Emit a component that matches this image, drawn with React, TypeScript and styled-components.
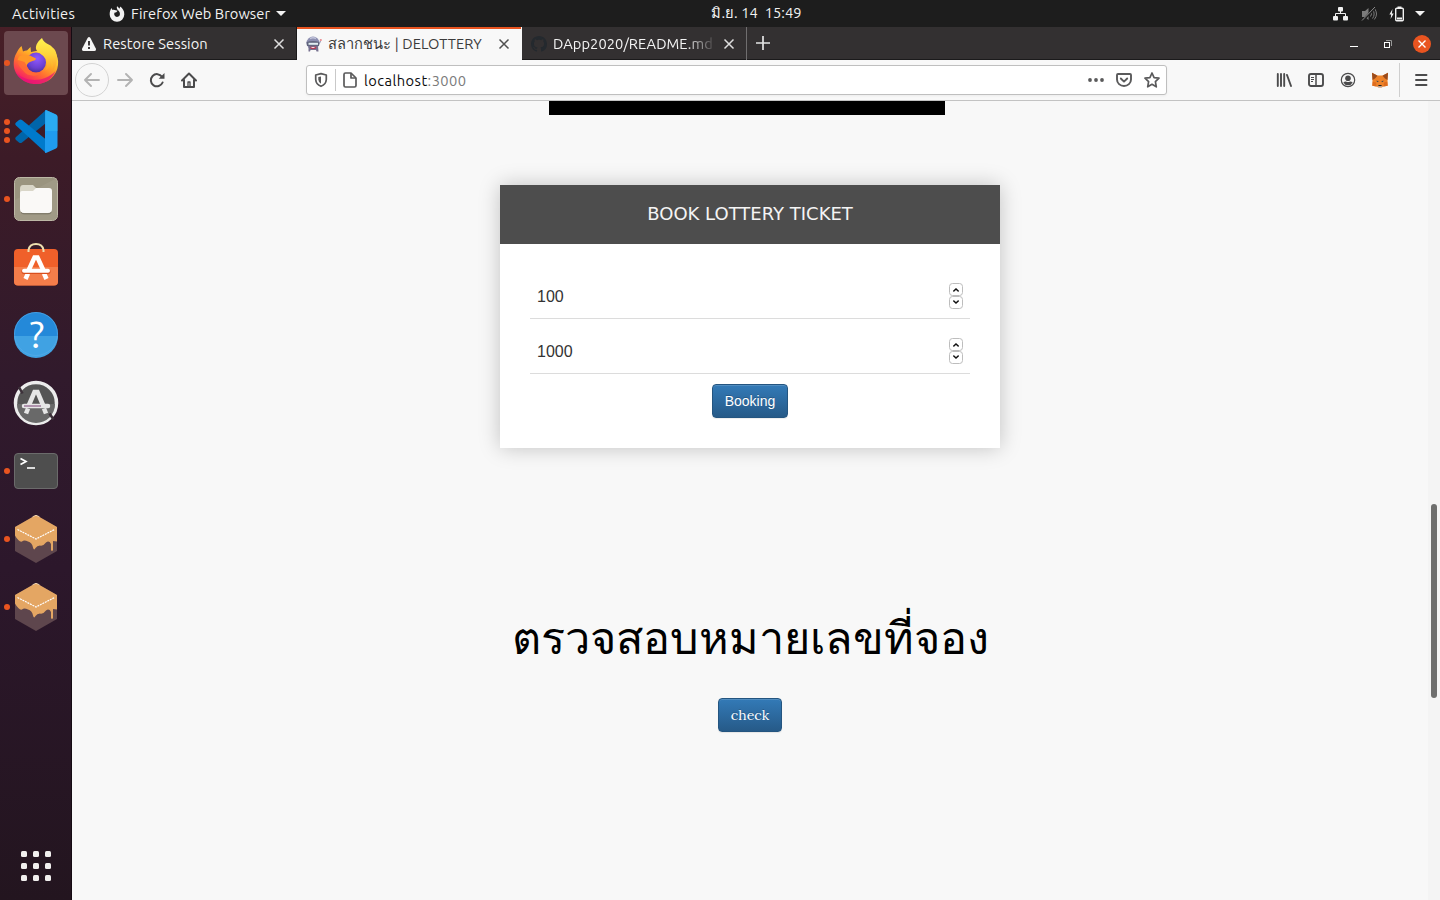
import React from "react";
import styled, { createGlobalStyle } from "styled-components";

const GlobalStyle = createGlobalStyle`
  * { box-sizing: border-box; }
  html, body { margin: 0; height: 100%; overflow: hidden; background: #f8f8f8; }
  svg { display: block; flex: none; }
`;

const uiFont = `Ubuntu, "Noto Sans", "DejaVu Sans", sans-serif`;

const Desktop = styled.div`
  width: 1440px;
  height: 900px;
  display: grid;
  grid-template-rows: 27px 1fr;
  font-family: ${uiFont};
  font-size: 14.667px;
  overflow: hidden;
`;

const TopBar = styled.header`
  display: grid;
  grid-template-columns: 1fr auto 1fr;
  align-items: center;
  background: #1d1d1d;
  color: #f2f2f2;
  padding: 0 15px 0 12px;
`;

const Label = styled.span<{ $spacing?: number; $size?: number }>`
  font-size: ${(p) => p.$size ?? 14.667}px;
  letter-spacing: ${(p) => p.$spacing ?? 0.06}px;
  line-height: 20px;
  white-space: pre;
`;

const Clock = styled(Label)`
  margin: 0 0 2px 76px;
`;

const BarStart = styled.div`
  display: flex;
  align-items: center;
`;

const AppMenu = styled.div`
  display: flex;
  align-items: center;
  gap: 6px;
  margin-left: 34px;
`;

const BarEnd = styled.div`
  display: flex;
  justify-content: flex-end;
  align-items: center;
`;

const Work = styled.div`
  display: grid;
  grid-template-columns: 72px 1fr;
  min-height: 0;
`;

const Dock = styled.nav`
  display: flex;
  flex-direction: column;
  gap: 4px;
  padding: 4px;
  border-right: 1px solid #150b13;
  background: linear-gradient(180deg, #481f27 0%, #3c1b27 15%, #311a2c 40%, #2c172b 62%, #23151f 100%);
`;

const DockItem = styled.button<{ $active?: boolean; $lift?: number }>`
  position: relative;
  flex: none;
  width: 64px;
  height: 64px;
  padding: 0 0 ${(p) => (p.$lift ?? 0) * 2}px;
  border: 0;
  border-radius: 4px;
  display: flex;
  align-items: center;
  justify-content: center;
  background: ${(p) => (p.$active ? "#6c494f" : "transparent")};
`;

const RunningDots = styled.span`
  position: absolute;
  left: 0;
  top: 0;
  height: 100%;
  display: flex;
  flex-direction: column;
  justify-content: center;
  gap: 3px;
  i {
    width: 6px;
    height: 6px;
    border-radius: 50%;
    background: #e95420;
  }
`;

const AppGrid = styled.button`
  margin: auto 0 15px 17px;
  width: 30px;
  height: 30px;
  padding: 0;
  border: 0;
  background: none;
  display: grid;
  grid-template-columns: repeat(3, 6px);
  grid-auto-rows: 6px;
  gap: 6px;
  i {
    background: #f1efee;
    border-radius: 1.5px;
  }
`;

const Browser = styled.section`
  display: grid;
  grid-template-rows: 33px 41px 1fr;
  min-width: 0;
  min-height: 0;
`;

const TabBar = styled.div`
  display: flex;
  background: #333031;
  box-shadow: inset 0 -1px #1b1a1b;
`;

const Tab = styled.div<{ $active?: boolean }>`
  width: 225px;
  flex: none;
  display: flex;
  align-items: center;
  padding: 0 11px 0 9px;
  color: ${(p) => (p.$active ? "#3b3b3b" : "#f4f4f4")};
  background: ${(p) => (p.$active ? "#f8f8f8" : "transparent")};
  box-shadow: ${(p) => (p.$active ? "inset 0 2px #e95420" : "none")};
  border-right: 1px solid ${(p) => (p.$active ? "#f8f8f8" : "transparent")};
  &:first-child { border-right-color: #1b1a1b; }
`;

const TabTitle = styled(Label)<{ $fade?: boolean }>`
  flex: 1;
  min-width: 0;
  overflow: hidden;
  margin: 0 9px 0 6px;
  ${(p) => p.$fade && "mask-image: linear-gradient(90deg, #000 82%, transparent 102%);"}
`;

const NewTab = styled.button`
  width: 32px;
  border: 0;
  padding: 0 0 2px;
  background: none;
  display: flex;
  align-items: center;
  justify-content: center;
`;

const TabStripEdge = styled.i`
  width: 1px;
  margin-left: -1px;
  background: #706e6f;
`;

const WindowControls = styled.div`
  margin-left: auto;
  padding-right: 9px;
  display: flex;
  align-items: center;
`;

const CloseWindow = styled.span`
  width: 18px;
  height: 18px;
  margin-left: 21px;
  border-radius: 50%;
  background: #e95420;
  display: flex;
  align-items: center;
  justify-content: center;
`;

const Toolbar = styled.div`
  display: flex;
  align-items: center;
  background: #f8f8f8;
  border-bottom: 1px solid #c3c3c3;
  padding-left: 3px;
`;

const BackButton = styled.span`
  width: 34px;
  height: 34px;
  border: 1px solid #d3d3d3;
  border-radius: 50%;
  display: flex;
  align-items: center;
  justify-content: center;
`;

const NavIcons = styled.div`
  display: flex;
  align-items: center;
  gap: 16px;
  margin-left: 8px;
`;

const UrlBar = styled.div`
  width: 861px;
  height: 30px;
  margin-left: 109px;
  display: flex;
  align-items: center;
  background: #fff;
  border: 1px solid #bfbfbf;
  border-radius: 3px;
  padding: 0 6px;
  box-shadow: 0 1px 3px rgba(0, 0, 0, 0.05);
`;

const UrlDivider = styled.i`
  width: 1px;
  height: 22px;
  margin: 0 6px;
  background: #c9c9c9;
`;

const Url = styled(Label)`
  color: #0c0c0d;
  margin: 2px 0 0 6px;
  em {
    font-style: normal;
    color: #7b7b7b;
  }
`;

const UrlActions = styled.div`
  display: flex;
  gap: 12px;
  margin-left: auto;
`;

const ToolIcons = styled.div`
  display: flex;
  align-items: center;
  gap: 16px;
  margin-left: 109px;
`;

const MenuZone = styled.div`
  height: 34px;
  margin-left: 11px;
  padding-left: 13px;
  border-left: 1px solid #cfcfcf;
  display: flex;
  align-items: center;
`;

const Viewport = styled.div`
  display: grid;
  grid-template-columns: 1fr 12px;
  min-height: 0;
  background: #f8f8f8;
`;

const Page = styled.main`
  display: flex;
  flex-direction: column;
  align-items: center;
`;

const BlackStrip = styled.div`
  width: 396px;
  height: 14px;
  margin-right: 6px;
  background: #000;
`;

const Card = styled.form`
  width: 500px;
  margin-top: 70px;
  background: #fff;
  box-shadow: 0 0 20px rgba(0, 0, 0, 0.22);
`;

const CardHeader = styled.h2`
  margin: 0;
  height: 59px;
  padding-bottom: 2px;
  display: flex;
  align-items: center;
  justify-content: center;
  background: #4d4d4d;
  color: #f4f4f4;
  font: 400 18px/57px "DejaVu Sans", sans-serif;
`;

const CardBody = styled.div`
  padding: 30px;
  display: flex;
  flex-direction: column;
  align-items: center;
  gap: 10px;
`;

const Field = styled.div`
  width: 100%;
  height: 45px;
  padding: 0 7px;
  display: flex;
  align-items: center;
  justify-content: space-between;
  border-bottom: 1px solid #dcdcdc;
  color: #333;
  font: 16px/20px "Liberation Sans", Arial, sans-serif;
  > span:first-child { padding-top: 2px; }
`;

const Stepper = styled.span`
  display: flex;
  flex-direction: column;
  b {
    width: 14px;
    height: 13px;
    border: 1px solid #bdbdbd;
    border-radius: 3.5px;
    display: flex;
    align-items: center;
    justify-content: center;
  }
  b:last-child { padding-bottom: 2px; }
`;

const BlueButton = styled.button<{ $serif?: boolean }>`
  width: ${(p) => (p.$serif ? 64 : 76)}px;
  height: 34px;
  padding: 0;
  border: 1px solid #245580;
  border-radius: 4px;
  color: #fff;
  background: linear-gradient(180deg, #337ab7 0%, #265a88 100%);
  box-shadow: inset 0 1px 0 rgba(255, 255, 255, 0.15), 0 1px 1px rgba(0, 0, 0, 0.075);
  text-shadow: 0 -1px 0 rgba(0, 0, 0, 0.2);
  font: 14px/20px ${(p) => (p.$serif ? `Lora, "DejaVu Serif", serif` : `"Liberation Sans", Arial, sans-serif`)};
`;

const CheckTitle = styled.h1`
  margin: 148px 0 0;
  height: 102px;
  color: #000;
  font: 400 45px/84px Ubuntu, "Noto Sans", "DejaVu Sans", sans-serif;
  white-space: nowrap;
`;

const ScrollTrack = styled.div`
  background: #f4f4f4;
  padding: 403px 3px 0;
`;

const ScrollThumb = styled.div`
  width: 6px;
  height: 194px;
  border-radius: 3px;
  background: #6e6e6d;
`;

const CloseIcon = ({ color }: { color: string }) => (
  <svg width="12" height="12" viewBox="0 0 12 12">
    <path d="M1.500 1.500l9 9M10.500 1.500l-9 9" stroke={color} strokeWidth="1.500" />
  </svg>
);

const Caret = () => (
  <svg width="10" height="5" viewBox="0 0 10 5"><path d="M0 0h10L5 5z" fill="#f2f2f2" /></svg>
);

const FirefoxGlyph = () => (
  <svg width="16" height="16" viewBox="0 0 16 16">
    <path fillRule="evenodd" fill="#f2f2f2" d="M8 .2c1.100.7 2 1.600 2.300 2.600C11 2 11.100 1.200 11 .6c2.400 1.500 4.500 4.200 4.300 8A7.200 7.200 0 0 1 8 15.700 7.200 7.200 0 0 1 .7 8.700C.5 6 1.300 3.600 2.700 2c.1 1 .4 1.500.9 2 1.100-.4 2.200-.2 3 .3l2 .5-1.300 1.400-1.900.6c-.7 2 .4 4.200 2.600 4.200 2 0 3.200-1.600 2.900-3.400C10.700 5.800 9.700 5 9 4.300 8 3.300 7.500 1.800 8 .2z" />
  </svg>
);

const NetworkIcon = () => (
  <svg width="16" height="14" viewBox="0 0 16 14" fill="#f2f2f2">
    <rect x="5" y="0" width="5" height="4.500" rx="1" />
    <rect x="0" y="9" width="5" height="4.500" rx="1" />
    <rect x="10" y="9" width="5" height="4.500" rx="1" />
    <path d="M7.500 4v3M2.500 10V6.500h10V10" fill="none" stroke="#f2f2f2" />
  </svg>
);

const MutedIcon = () => (
  <svg width="16" height="16" viewBox="0 0 16 16">
    <path d="M1 5h3l3.500-3v12L4 11H1z" fill="#7c7c7c" />
    <path d="M9.500 5.500a4 4 0 0 1 0 5M11.500 3.500a7 7 0 0 1 0 9M13.500 2.500a9 9 0 0 1-.2 11" fill="none" stroke="#7c7c7c" />
    <path d="M1.500 15L14.500 1" stroke="#1d1d1d" strokeWidth="2.500" />
    <path d="M1 14.500L14 1" stroke="#8a8a8a" strokeWidth="1" />
  </svg>
);

const BatteryIcon = () => (
  <svg width="16" height="16" viewBox="0 0 16 16">
    <path d="M3.500 3L.4 8.500h1.800L1.600 13 4.700 7.500H2.900z" fill="#f2f2f2" />
    <rect x="6.700" y="2.200" width="7.600" height="12.600" rx="1" fill="none" stroke="#f2f2f2" strokeWidth="1.400" />
    <path d="M8.500.5h4v1.500h-4zM8 11.500h5v2H8z" fill="#f2f2f2" />
  </svg>
);

const FirefoxLogo = () => (
  <svg width="46" height="48" viewBox="0 0 46 48">
    <defs>
      <linearGradient id="ffBody" x1=".85" y1=".1" x2=".25" y2=".95">
        <stop offset="0" stopColor="#fff14a" />
        <stop offset=".35" stopColor="#ffae27" />
        <stop offset=".65" stopColor="#ff6a32" />
        <stop offset="1" stopColor="#f5156c" />
      </linearGradient>
      <radialGradient id="ffGlobe" cx=".55" cy=".3" r=".8">
        <stop offset="0" stopColor="#9059ff" />
        <stop offset=".6" stopColor="#6a3fd0" />
        <stop offset="1" stopColor="#3b2a8c" />
      </radialGradient>
      <linearGradient id="ffTail" x1=".5" y1="0" x2=".5" y2="1">
        <stop offset="0" stopColor="#fff44f" />
        <stop offset=".5" stopColor="#ffd23c" />
        <stop offset="1" stopColor="#ff9a26" />
      </linearGradient>
    </defs>
    <path fill="url(#ffBody)" d="M3.500 15c1-2.500 3-5 5-7l1.500 5.500c1.500-1 3-1 4-1l3.500-3.500.5 5 10-2 14 2c2.500 4 3.500 8 3 13-1 11-10.500 19-22 19S.7 37.500.7 26C.7 22 1.500 18 3.500 15z" />
    <path fill="#e4107c" opacity=".7" d="M2.500 34c8 9.500 28 12 40-1-4 9-11 13-19.500 13-9 0-16.500-4-20.500-12z" />
    <circle cx="23" cy="24.500" r="10" fill="url(#ffGlobe)" />
    <path fill="url(#ffTail)" d="M29 0c-4 3-6.500 7-6 11 1 3 5 4.500 8 7.500 4 4 4 9.500 1 14 4.500-2 6.500-5 6.500-9.500 2 3 2 7 .5 10.500 6-6 6-16 3-21.500-1-1.500-2-2.500-3-3C37.500 6 31 6 29 0z" />
    <path fill="#ff9827" d="M6 18.500c4-2 8-2 11-1l6 3c0 2.500-5 2.500-6 3.500-2 1-3.500 2.500-3.500 5l-4-1-5-6z" />
    <path fill="#ff6a35" d="M5 22l6.500 2L14 28c1 6 9 8.500 15 5.500-4 6-15 5.500-19-1C7 29 4 26 5 22z" opacity=".9" />
  </svg>
);

const VsCodeLogo = () => (
  <svg width="43" height="43" viewBox="0 0 43 43">
    <path fill="#0065a9" d="M31 0L1 27q-1.500 1.500 0 3l3 2.500q1.500 1 3 0L31 13z" />
    <path fill="#007acc" d="M31 43L1 15.500q-1.500-1.500 0-3L4 10q1.500-1 3 0l24 19.500z" />
    <path fill="#1f9cf0" d="M31 0l10 4.500q1.500.8 1.500 2.500v29q0 1.700-1.500 2.500L31 43q-1.500 0-1-1.500v-40Q29.500 0 31 0z" />
    <path fill="#32b5f1" opacity=".6" d="M31 0l10 4.500q1.500.8 1.500 2.500v14H30.500V1z" />
  </svg>
);

const FilesLogo = () => (
  <svg width="46" height="46" viewBox="0 0 46 46">
    <rect x="1.500" y="1.500" width="43" height="43" rx="5" fill="#9a947f" stroke="#bdb8a6" />
    <path d="M2 24L44 2V40q0 4-4 4H6q-4 0-4-4z" fill="#a59f8b" opacity=".6" />
    <path d="M7 13q0-4 3-4h10l3 3v8H7z" fill="#d9d6c8" />
    <path d="M7 17q0-2 2-2h11l3-3h13q3 0 3 3v18q0 4-4 4H11q-4 0-4-4z" fill="#faf9f7" />
    <path d="M8 36.500q1 1.300 3 1.300h24q2 0 3.300-1.300" fill="none" stroke="#777263" />
  </svg>
);

const SoftwareLogo = () => (
  <svg width="46" height="46" viewBox="0 0 46 46">
    <rect x="1" y="8" width="44" height="36.500" rx="4" fill="#f0602a" />
    <path d="M1 26h44v14.500q0 4-4 4H5q-4 0-4-4z" fill="#f58452" opacity=".8" />
    <path d="M15.500 11V9q1-6 7.500-6t7.500 6v2" fill="none" stroke="#eedfb0" strokeWidth="2" />
    <path d="M12.500 38l2.500-5.500M33.500 38L31 32.500" fill="none" stroke="#fff" strokeWidth="4.500" />
    <path d="M15.500 29.500l6-13h3l6 13" fill="none" stroke="#fff" strokeWidth="4.500" />
    <path d="M11 30.500h24" stroke="#d94f1e" strokeWidth="5" strokeLinecap="round" />
    <path d="M11 29.800h24" stroke="#fff" strokeWidth="4" strokeLinecap="round" />
  </svg>
);

const HelpLogo = () => (
  <svg width="46" height="46" viewBox="0 0 46 46" overflow="visible">
    <circle cx="23" cy="23" r="22" fill="#2489d9" />
    <path d="M1 25a22 22 0 0 0 44 0z" fill="#40a2e3" />
    <circle cx="23" cy="23" r="21.500" fill="none" stroke="#5aaee9" opacity=".6" />
    <text x="24" y="37" textAnchor="middle" fontFamily="Ubuntu, Noto Sans" fontSize="38" fill="#fff">?</text>
  </svg>
);

const UpdaterLogo = () => (
  <svg width="46" height="46" viewBox="0 0 46 46">
    <circle cx="23" cy="23" r="20.500" fill="#555" stroke="#ececec" strokeWidth="3.500" />
    <path d="M4 24h38a19 19 0 0 1-38 0z" fill="#696969" />
    <path d="M6 7l3.500 6.500M36.500 33.500l4 6" stroke="#3c3039" strokeWidth="2.500" />
    <path d="M13 33.500l2-5M33 33.500l-2-5" fill="none" stroke="#e6e6e6" strokeWidth="4.500" />
    <path d="M16 25l5.500-13h3L30 25" fill="none" stroke="#e6e6e6" strokeWidth="4.500" />
    <path d="M11 26h24" stroke="#e6e6e6" strokeWidth="4.500" strokeLinecap="round" />
    <path d="M11 26h17" stroke="#7b4277" />
  </svg>
);

const TerminalLogo = () => (
  <svg width="46" height="46" viewBox="0 0 46 46">
    <rect x="1.500" y="5.500" width="43" height="35" rx="3.500" fill="#4e4e4e" stroke="#6b6b6b" />
    <path d="M7.500 10.500l5.500 3-5.500 3" fill="none" stroke="#fff" strokeWidth="1.700" />
    <path d="M14 20h8" stroke="#fff" strokeWidth="1.600" />
  </svg>
);

const GanacheLogo = () => (
  <svg width="42" height="48" viewBox="0 0 42 48">
    <path d="M21 0l21 12v24L21 48 0 36V12z" fill="#5e464d" />
    <path d="M21 0l21 12v14.500l-4-.5v9q-1 2-2 0v-6q-2-4-5-1.500-3 4-6 3-3 0-4.500 2.500-1.500 3-2.500-.5-1-5-5-6-4-2-6 0-3 1-7-6V12z" fill="#e4a663" />
    <path d="M2.500 14.500L21 24l18.500-9.500" fill="none" stroke="#fff" strokeWidth="1.200" strokeDasharray="2 .8" />
    <path d="M17.500 1.800l3.500-1.500 3.500 1.500" fill="none" stroke="#f7dfc0" strokeWidth=".8" />
  </svg>
);

const WarningIcon = () => (
  <svg width="16" height="16" viewBox="0 0 16 16">
    <path d="M6.600 2q1.400-2 2.800 0l5.400 10.500q.8 2.200-1.400 2.500H2.600Q.4 14.700 1.200 12.500z" fill="#f5f5f5" />
    <path d="M8 5v4.500M8 11v2" stroke="#333031" strokeWidth="1.900" />
  </svg>
);

const LotteryIcon = () => (
  <svg width="16" height="16" viewBox="0 0 16 16">
    <ellipse cx="7" cy="7" rx="6.500" ry="6.500" fill="#8c8eb0" />
    <path d="M2.500 10h9.500l.5 5.500h-2L10 14H4.500L4 15.500H2.500z" fill="#77718f" />
    <path d="M.5 6q6.500-2 13 0l-.5 4H1z" fill="#62667f" />
    <path d="M2.500 6.800h9.500v2H2.500z" fill="#e1edf2" />
    <path d="M4 10.800h6.500l-1 2.200H5z" fill="#b53c55" />
    <path d="M5.500 11h3v1h-3z" fill="#f3dde1" />
    <path d="M4 2.500q3-1.500 6 0" stroke="#c2c4da" strokeWidth="1.400" fill="none" />
    <circle cx="14.800" cy="4" r="1.100" fill="#e8888c" />
    <path d="M13.300 8l1.300-3" stroke="#9a9ab2" />
  </svg>
);

const GithubIcon = () => (
  <svg width="16" height="16" viewBox="0 0 16 16">
    <path fill="#24292e" d="M8 0C3.580 0 0 3.580 0 8c0 3.540 2.290 6.530 5.470 7.590.4.070.55-.17.55-.38 0-.19-.01-.82-.01-1.490-2.010.37-2.530-.49-2.690-.94-.09-.23-.48-.94-.82-1.130-.28-.15-.68-.52-.01-.53.63-.01 1.080.58 1.230.82.72 1.210 1.870.87 2.330.66.070-.52.28-.87.51-1.070-1.780-.2-3.640-.89-3.640-3.950 0-.87.31-1.590.82-2.150-.08-.2-.36-1.020.08-2.120 0 0 .67-.21 2.200.82.64-.18 1.320-.27 2-.27s1.360.09 2 .27c1.530-1.040 2.200-.82 2.200-.82.44 1.100.16 1.920.08 2.120.51.56.82 1.270.82 2.150 0 3.070-1.870 3.750-3.650 3.950.29.25.54.73.54 1.480 0 1.070-.01 1.930-.01 2.200 0 .21.15.46.55.38A8.010 8.010 0 0 0 16 8c0-4.420-3.580-8-8-8z" />
  </svg>
);

const Arrow = ({ flip }: { flip?: boolean }) => (
  <svg width="16" height="16" viewBox="0 0 16 16" fill="none" stroke="#b3b3b3" strokeWidth="1.900" strokeLinecap="round" strokeLinejoin="round">
    <path d={flip ? "M1 8h14M9 2l6 6-6 6" : "M15 8H1M7 2L1 8l6 6"} />
  </svg>
);

const ReloadIcon = () => (
  <svg width="16" height="16" viewBox="0 0 16 16">
    <path d="M13 4.800A6.100 6.100 0 1 0 13.600 10.500" fill="none" stroke="#4b4b4c" strokeWidth="2" strokeLinecap="round" />
    <path d="M15.500 1v5.800H9.700z" fill="#4b4b4c" />
  </svg>
);

const HomeIcon = () => (
  <svg width="16" height="16" viewBox="0 0 16 16" fill="none" stroke="#4b4b4c" strokeWidth="2" strokeLinecap="round" strokeLinejoin="round">
    <path d="M1 8.500L8 1.500l7 7M3 8v7h10V8" />
    <path d="M7 14v-4h2v4" strokeWidth="1.300" />
  </svg>
);

const ShieldIcon = () => (
  <svg width="16" height="16" viewBox="0 0 16 16">
    <path d="M8 1.700l5.300 1.300v4.500Q13 12.500 8 14.300 3 12.500 2.700 7.500V3z" fill="none" stroke="#5a5a5b" strokeWidth="1.700" strokeLinejoin="round" />
    <path d="M8 4.500v7.200Q5.500 10.500 5.300 7.500V5z" fill="#5a5a5b" />
  </svg>
);

const PageIcon = () => (
  <svg width="16" height="16" viewBox="0 0 16 16" fill="none" stroke="#5a5a5b" strokeWidth="1.700" strokeLinejoin="round">
    <path d="M4 1h5l5 5v7.500Q14 15 12.500 15h-9Q2 15 2 13.500v-11Q2 1 3.500 1z" />
    <path d="M9 1v5h5" />
  </svg>
);

const DotsIcon = () => (
  <svg width="16" height="16" viewBox="0 0 16 16" fill="#5a5a5b">
    <circle cx="2" cy="8" r="1.900" /><circle cx="8" cy="8" r="1.900" /><circle cx="14" cy="8" r="1.900" />
  </svg>
);

const PocketIcon = () => (
  <svg width="16" height="16" viewBox="0 0 16 16" fill="none" stroke="#5a5a5b" strokeWidth="1.900" strokeLinecap="round" strokeLinejoin="round">
    <path d="M2 2h12q1 0 1 1v4.500a7 6.500 0 0 1-14 0V3q0-1 1-1z" />
    <path d="M4.800 6.500L8 9.600l3.200-3.100" />
  </svg>
);

const StarIcon = () => (
  <svg width="16" height="16" viewBox="0 0 16 16" fill="none" stroke="#5a5a5b" strokeWidth="1.700" strokeLinejoin="round">
    <path d="M8 1l2.100 4.600 4.900.6-3.600 3.500.9 5.100L8 12.300l-4.300 2.500.9-5.100L1 6.200l4.900-.6z" />
  </svg>
);

const LibraryIcon = () => (
  <svg width="16" height="16" viewBox="0 0 16 16" fill="none" stroke="#4b4b4c" strokeWidth="1.900" strokeLinecap="round">
    <path d="M1.800 2v12M5 2v12M8.200 2v12M11 3l4 11" />
  </svg>
);

const SidebarIcon = () => (
  <svg width="16" height="16" viewBox="0 0 16 16" fill="none" stroke="#4b4b4c">
    <rect x="1" y="2" width="14" height="12" rx="2" strokeWidth="1.900" />
    <path d="M8 2v12" strokeWidth="1.500" />
    <path d="M3 5.500h3M3 7.500h3M3 9.500h2" />
  </svg>
);

const AccountIcon = () => (
  <svg width="16" height="16" viewBox="0 0 16 16">
    <circle cx="8" cy="8" r="6.700" fill="none" stroke="#4b4b4c" strokeWidth="1.200" />
    <circle cx="8" cy="6.300" r="2.800" fill="#4b4b4c" />
    <path d="M3.300 10.500Q5 9 6 9.500q2 1 4 0 1-.5 2.700 1a5.300 5.300 0 0 1-9.400 0z" fill="#4b4b4c" />
  </svg>
);

const MetaMaskIcon = () => (
  <svg width="16" height="16" viewBox="0 0 16 16">
    <path d="M0 .8L5.500 3.500h5L16 .8l-.5 7 .2 6-4.200.7L9.500 15.500h-3l-2-1L.3 13.800.5 7.800z" fill="#ee8228" />
    <path d="M0 .8L5.500 3.800 3 6.500.5 8zM16 .8l-5.500 3L13 6.500 15.500 8z" fill="#9a4b1c" />
    <path d="M.3 13.800l.5-4 3.200.7.5 4zM15.700 13.800l-.5-4-3.200.7-.5 4z" fill="#de6c1d" />
    <path d="M4 8.700l2.500.2-.5 1.300zM12 8.700l-2.500.2.5 1.300z" fill="#33414d" />
    <path d="M6.500 13h3l.2 1.200h-3.400z" fill="#222" />
    <path d="M5 14.200l1.500 1.300h3l1.500-1.300H5z" fill="#c9b6a8" />
  </svg>
);

const Chevron = ({ down }: { down?: boolean }) => (
  <svg width="6" height="4" viewBox="0 0 6 4">
    <path d={down ? "M.3 .6L3 3 5.700 .6" : "M.3 3.400L3 1l2.700 2.400"} fill="none" stroke="#111" strokeWidth="1.500" />
  </svg>
);

const dockApps = [
  { name: "Firefox", Logo: FirefoxLogo, windows: 1, active: true, lift: 1 },
  { name: "Code", Logo: VsCodeLogo, windows: 3 },
  { name: "Files", Logo: FilesLogo, windows: 1 },
  { name: "Software", Logo: SoftwareLogo, windows: 0, lift: 3 },
  { name: "Help", Logo: HelpLogo, windows: 0, lift: 1 },
  { name: "Updater", Logo: UpdaterLogo, windows: 0 },
  { name: "Terminal", Logo: TerminalLogo, windows: 1 },
  { name: "Ganache", Logo: GanacheLogo, windows: 1 },
  { name: "Ganache 2", Logo: GanacheLogo, windows: 1 },
];

const NumberField = ({ value }: { value: string }) => (
  <Field>
    <span>{value}</span>
    <Stepper>
      <b><Chevron /></b>
      <b><Chevron down /></b>
    </Stepper>
  </Field>
);

export default function App() {
  return (
    <>
      <GlobalStyle />
      <Desktop>
        <TopBar>
          <BarStart>
            <Label $spacing={0.3}>Activities</Label>
            <AppMenu>
              <FirefoxGlyph />
              <Label>Firefox Web Browser</Label>
              <Caret />
            </AppMenu>
          </BarStart>
          <Clock>{"มิ.ย. 14  15:49"}</Clock>
          <BarEnd>
            <NetworkIcon />
            <svg width="12" height="1" />
            <MutedIcon />
            <svg width="12" height="1" />
            <BatteryIcon />
            <svg width="10" height="1" />
            <Caret />
          </BarEnd>
        </TopBar>
        <Work>
          <Dock>
            {dockApps.map(({ name, Logo, windows, active, lift }) => (
              <DockItem key={name} $active={active} $lift={lift}>
                <RunningDots>
                  {Array.from({ length: windows }, (_, i) => <i key={i} />)}
                </RunningDots>
                <Logo />
              </DockItem>
            ))}
            <AppGrid>{Array.from({ length: 9 }, (_, i) => <i key={i} />)}</AppGrid>
          </Dock>
          <Browser>
            <TabBar>
              <Tab>
                <WarningIcon />
                <TabTitle>Restore Session</TabTitle>
                <CloseIcon color="#dedede" />
              </Tab>
              <Tab $active>
                <LotteryIcon />
                <TabTitle>สลากชนะ | DELOTTERY</TabTitle>
                <CloseIcon color="#505050" />
              </Tab>
              <Tab>
                <GithubIcon />
                <TabTitle $fade>DApp2020/README.md a</TabTitle>
                <CloseIcon color="#dedede" />
              </Tab>
              <TabStripEdge />
              <NewTab>
                <svg width="14" height="14" viewBox="0 0 14 14"><path d="M7 0v14M0 7h14" stroke="#e4e4e4" strokeWidth="1.700" /></svg>
              </NewTab>
              <WindowControls>
                <svg width="42" height="16" viewBox="0 0 42 16" fill="none">
                  <path d="M0 10.500h8" stroke="#fff" />
                  <path d="M36 4.500h5.500V10" stroke="#999" />
                  <rect x="34.500" y="6.500" width="5" height="5" stroke="#fff" />
                </svg>
                <CloseWindow>
                  <svg width="8" height="8" viewBox="0 0 8 8"><path d="M.5.5l7 7M7.500.5l-7 7" stroke="#fff" strokeWidth="1.400" /></svg>
                </CloseWindow>
              </WindowControls>
            </TabBar>
            <Toolbar>
              <BackButton><Arrow /></BackButton>
              <NavIcons>
                <Arrow flip />
                <ReloadIcon />
                <HomeIcon />
              </NavIcons>
              <UrlBar>
                <ShieldIcon />
                <UrlDivider />
                <PageIcon />
                <Url $spacing={0.44}>localhost<em>:3000</em></Url>
                <UrlActions>
                  <DotsIcon />
                  <PocketIcon />
                  <StarIcon />
                </UrlActions>
              </UrlBar>
              <ToolIcons>
                <LibraryIcon />
                <SidebarIcon />
                <AccountIcon />
                <MetaMaskIcon />
              </ToolIcons>
              <MenuZone>
                <svg width="16" height="16" viewBox="0 0 16 16"><path d="M3 3h10.500M3 8h10.500M3 13h10.500" stroke="#4b4b4c" strokeWidth="1.900" strokeLinecap="round" /></svg>
              </MenuZone>
            </Toolbar>
            <Viewport>
              <Page>
                <BlackStrip />
                <Card>
                  <CardHeader>BOOK LOTTERY TICKET</CardHeader>
                  <CardBody>
                    <NumberField value="100" />
                    <NumberField value="1000" />
                    <BlueButton type="button">Booking</BlueButton>
                  </CardBody>
                </Card>
                <CheckTitle>ตรวจสอบหมายเลขที่จอง</CheckTitle>
                <BlueButton type="button" $serif>check</BlueButton>
              </Page>
              <ScrollTrack><ScrollThumb /></ScrollTrack>
            </Viewport>
          </Browser>
        </Work>
      </Desktop>
    </>
  );
}
